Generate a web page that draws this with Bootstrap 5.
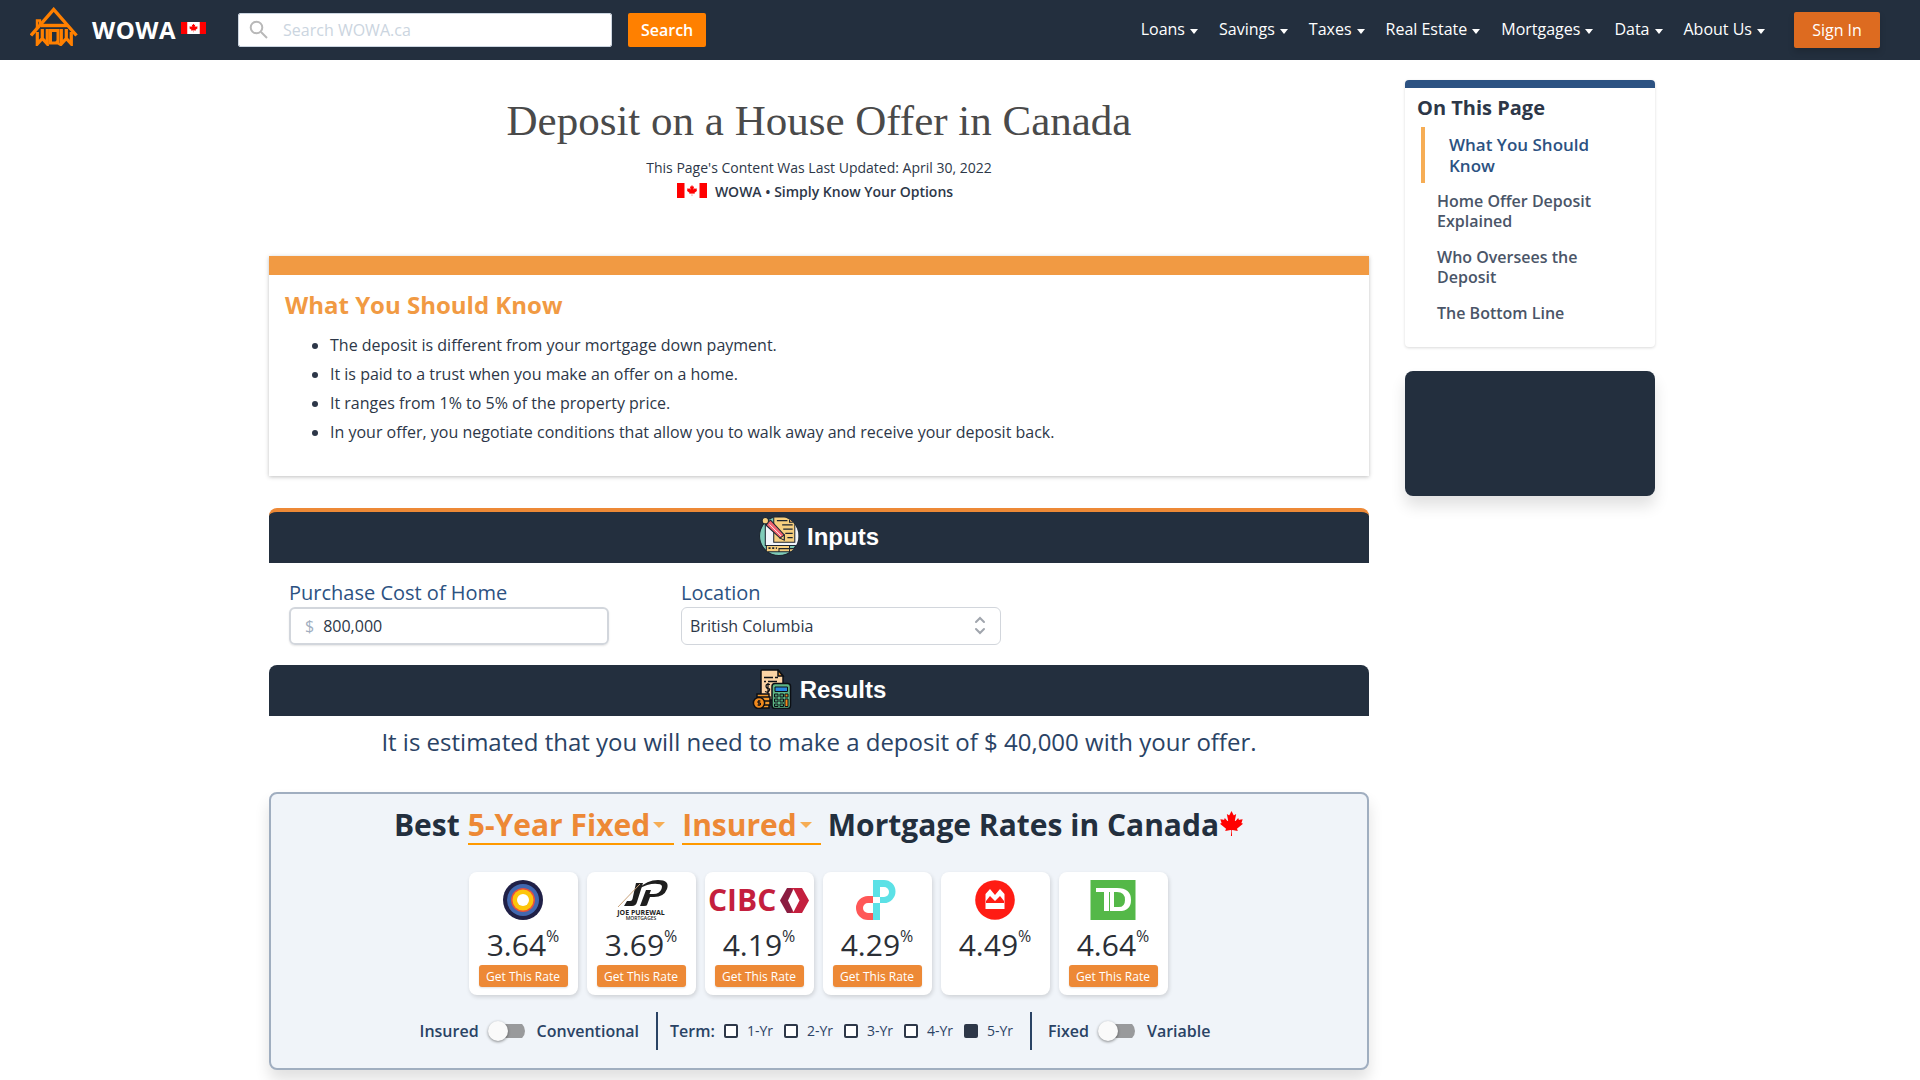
<!DOCTYPE html>
<html lang="en">
<head>
<meta charset="utf-8">
<meta name="viewport" content="width=device-width, initial-scale=1">
<title>Deposit on a House Offer in Canada | WOWA.ca</title>
<link href="https://cdn.jsdelivr.net/npm/bootstrap@5.3.0/dist/css/bootstrap.min.css" rel="stylesheet">
<style>
  :root { --navy: #232f3e; --ink: #2d3748; --blue: #2c5282; --orange: #ed8936; --deep: #2a4365; }
  body { font-family: "Open Sans", sans-serif; color: var(--ink); line-height: 24px; }
  a { text-decoration: none; }
  .topbar { background: var(--navy); height: 60px; padding: 0 40px 0 30px; }
  .brand-name { font-size: 24px; font-weight: 700; color: #fff; margin-left: 14px; line-height: 36px; letter-spacing: 0.5px; }
  .brand-flag { margin: 0 32px 4px 5px; }
  .search-field { position: relative; width: 374px; }
  .search-field svg { position: absolute; left: 11px; top: 7px; }
  .search-field input { height: 34px; border: 1px solid #cbd5e0; border-radius: 2px; padding: 0 12px 0 44px; font-size: 16px; }
  .search-field input::placeholder { color: #cbd5e0; }
  .search-btn { height: 34px; width: 78px; margin-left: 16px; background: #ff8000; color: #fff; font-weight: 600; border-radius: 2px; padding: 0; }
  .main-nav { gap: 21px; padding-bottom: 2px; }
  .main-nav a { color: #fff; font-size: 16px; display: flex; align-items: center; }
  .main-nav a::after { content: ""; border: 4px solid transparent; border-top: 5px solid #fff; border-bottom: 0; margin: 4px 0 0 5px; }
  .sign-in { width: 86px; height: 36px; margin-left: 29px; background: #dd6b20; color: #fff; border-radius: 2px; padding: 0; box-shadow: 0 4px 6px rgba(0,0,0,.15); }

  .page-wrap { gap: 36px; }
  .content-col { flex: 0 1 1100px; min-width: 0; }
  .side-col { flex: 0 0 250px; padding-top: 20px; }
  .page-title { font-family: "Liberation Serif", serif; font-size: 43px; line-height: 52px; font-weight: 400; color: #4a4a4a; margin: 35px 0 9px; }
  .meta-line { font-size: 14px; line-height: 24px; }
  .know-card { margin-top: 52px; border-top: 19px solid #f19a43; padding: 14px 16px 29px; box-shadow: 0 1px 4px rgba(0,0,0,.25); }
  .know-card h2 { color: #f19a43; font-size: 24px; line-height: 32px; font-weight: 700; margin: 0 0 10px; }
  .know-card ul { padding-left: 45px; margin: 0; }
  .know-card li { line-height: 29px; }

  .section-bar { background: var(--navy); color: #fff; border-radius: 8px 8px 0 0; height: 51px; font-family: "Liberation Sans", sans-serif; font-size: 24px; font-weight: 700; gap: 8px; margin: 0; }
  .inputs-bar { border-top: 4px solid var(--orange); height: 55px; margin-top: 32px; }
  .field-row { gap: 72px; padding: 16px 20px 20px; }
  .field { flex: 0 1 320px; }
  .field label { font-size: 20px; line-height: 28px; color: var(--blue); display: block; }
  .money { height: 38px; border: 2px solid #d2d6dc; border-radius: 6px; box-shadow: 0 1px 2px rgba(0,0,0,.1); padding-left: 14px; gap: 9px; color: #a0aec0; }
  .money input, .place select { color: var(--ink); font-size: 16px; }
  .money input { border: 0; outline: 0; padding: 0; min-width: 0; flex: 1; }
  .place { position: relative; }
  .place select { height: 38px; border: 1px solid #d2d6dc; border-radius: 6px; background-image: none; padding: 0 36px 0 8px; }
  .place svg { position: absolute; right: 15px; top: 9px; pointer-events: none; }
  .estimate { font-size: 24px; line-height: 36px; color: var(--deep); margin: 8px 0 32px; }

  .rates { border: 2px solid #a0aec0; border-radius: 8px; background: #f0f4f9; box-shadow: 0 10px 15px rgba(0,0,0,.12); padding: 9px 0 18px; margin-bottom: 10px; }
  .rates h2 { color: var(--navy); font-size: 30px; line-height: 44px; font-weight: 700; margin: 0; }
  .pick { border: 0; border-bottom: 2px solid #ff9900; background: none; color: var(--orange); font-weight: 700; font-size: 30px; line-height: 36px; padding: 0 9px 0 0; margin: 4px 0 0 8px; display: flex; align-items: center; }
  .pick:last-of-type { margin-right: 7px; }
  .pick::after { content: ""; border: 6px solid transparent; border-top: 6px solid #f6ad55; border-bottom: 0; margin-left: 3px; }
  .rate-list { gap: 9px; margin-top: 25px; padding-right: 2px; }
  .rate-card { width: 109px; height: 123px; background: #fff; border-radius: 8px; box-shadow: 1px 2px 4px rgba(0,0,0,.14); padding-top: 8px; }
  .rate-num { font-size: 30px; line-height: 42px; height: 45px; padding-top: 4px; color: #2b2f36; display: flex; }
  .rate-num span { font-size: 16px; line-height: 24px; }
  .rate-btn { width: 89px; height: 22px; background: var(--orange); color: #fff; font-size: 12px; border-radius: 3px; padding: 0; line-height: 22px; box-shadow: 0 1px 2px rgba(0,0,0,.12); }
  .filters { margin-top: 17px; padding-right: 8px; height: 38px; color: var(--deep); font-weight: 600; font-size: 16px; }
  .switch { appearance: none; width: 37px; height: 20px; margin: 0 12px 0 9px; display: flex; align-items: center; background: linear-gradient(#999a9c, #999a9c) right center / 30px 14px no-repeat; border-radius: 0 10px 10px 0; }
  .switch::before { content: ""; width: 20px; height: 20px; border-radius: 50%; background: #fafafa; box-shadow: 0 1px 3px rgba(0,0,0,.45); }
  .rule { width: 2px; height: 38px; background: var(--deep); margin: 0 12px 0 17px; }
  .term-title { margin-right: 9px; }
  .term { width: 60px; font-size: 14px; font-weight: 400; gap: 9px; }
  .term-last { width: auto; }
  .term input { appearance: none; width: 14px; height: 14px; border: 2px solid var(--ink); border-radius: 2px; background: #fff; margin: 0; }
  .term input:checked { background: var(--ink); }

  .toc { border-top: 8px solid var(--blue); border-radius: 4px; box-shadow: 0 1px 3px rgba(0,0,0,.15); padding: 5px 12px 16px; }
  .toc h2 { font-size: 20px; line-height: 30px; font-weight: 700; margin: 0 0 4px; }
  .toc a { display: block; margin-left: 4px; padding: 8px 24px 8px 16px; line-height: 20px; font-weight: 600; color: #4a5568; }
  .toc a.current { border-left: 4px solid #f6ad55; padding: 7px 24px; font-size: 17px; line-height: 21px; color: var(--blue); }
  .promo { height: 125px; margin-top: 24px; background: var(--navy); border-radius: 8px; box-shadow: 0 10px 15px rgba(0,0,0,.12); }
</style>
<script src="https://cdn.jsdelivr.net/npm/bootstrap@5.3.0/dist/js/bootstrap.bundle.min.js"></script>
</head>
<body>
<svg width="0" height="0" class="position-absolute" aria-hidden="true">
  <symbol id="leaf" viewBox="-2015 -2000 4030 4030"><path fill="#f00" d="m-90 2030 45-863a95 95 0 0 0-111-98l-859 151 116-320a65 65 0 0 0-20-73l-941-762 212-99a65 65 0 0 0 34-79l-186-572 542 115a65 65 0 0 0 73-38l105-247 423 454a65 65 0 0 0 111-57l-204-1052 327 189a65 65 0 0 0 91-27l332-652 332 652a65 65 0 0 0 91 27l327-189-204 1052a65 65 0 0 0 111 57l423-454 105 247a65 65 0 0 0 73 38l542-115-186 572a65 65 0 0 0 34 79l212 99-941 762a65 65 0 0 0-20 73l116 320-859-151a95 95 0 0 0-111 98l45 863z"/></symbol>
  <symbol id="flag" viewBox="0 0 32 16"><path fill="#fff" d="M0 0h32v16H0z"/><path fill="#f00" d="M0 0h8v16H0zM24 0h8v16h-8z"/><use href="#leaf" x="10" y="2" width="12" height="12"/></symbol>
</svg>

<header class="topbar d-flex align-items-center">
  <a href="#" class="d-flex align-items-center" aria-label="WOWA home">
    <svg class="mb-2" width="48" height="39" viewBox="0 0 48 39" fill="none" stroke="#ff8000">
      <path stroke-width="3.400" d="M1 28.500 23.700 2.500 46.500 28.500"/>
      <path stroke-width="3.400" d="M11 18.500h26"/>
      <path stroke-width="2.400" d="M10 17v-3.500H7V22"/>
      <path stroke-width="3.200" d="M7.300 25v12l5-5.500 5 5.500V22M12.300 22v10M31.300 22v15l5-5.500 5 5.500V25M36.300 22v10"/>
      <path stroke-width="3" d="M20.500 23.500h7.500v12.500h-7.500z"/>
      <path stroke-width="2" d="M26 34l4 4"/>
    </svg>
    <span class="brand-name">WOWA</span>
    <svg class="brand-flag" width="25" height="12" viewBox="0 0 32 16" preserveAspectRatio="none"><use href="#flag" width="32" height="16"/></svg>
  </a>
  <form class="d-flex" role="search">
    <div class="search-field">
      <input type="search" class="form-control" placeholder="Search WOWA.ca" aria-label="Search WOWA.ca">
      <svg width="20" height="20" fill="none" stroke="#b8b8b8" stroke-width="2"><circle cx="7.500" cy="7.500" r="5.800"/><path d="m12 12 6 6"/></svg>
    </div>
    <button type="button" class="btn search-btn">Search</button>
  </form>
  <nav class="main-nav d-flex ms-auto" aria-label="Main">
    <a href="#">Loans</a><a href="#">Savings</a><a href="#">Taxes</a><a href="#">Real Estate</a><a href="#">Mortgages</a><a href="#">Data</a><a href="#">About Us</a>
  </nav>
  <button type="button" class="btn sign-in">Sign In</button>
</header>

<div class="page-wrap d-flex justify-content-center align-items-start ps-1">
  <main class="content-col">
    <div class="text-center">
      <h1 class="page-title">Deposit on a House Offer in Canada</h1>
      <div class="meta-line">This Page's Content Was Last Updated: April 30, 2022</div>
      <div class="meta-line fw-semibold d-flex align-items-center justify-content-center pe-2">
        <svg class="me-2 mb-1" width="30" height="15" viewBox="0 0 32 16"><use href="#flag" width="32" height="16"/></svg>WOWA • Simply Know Your Options
      </div>
    </div>

    <section class="know-card">
      <h2>What You Should Know</h2>
      <ul>
        <li>The deposit is different from your mortgage down payment.</li>
        <li>It is paid to a trust when you make an offer on a home.</li>
        <li>It ranges from 1% to 5% of the property price.</li>
        <li>In your offer, you negotiate conditions that allow you to walk away and receive your deposit back.</li>
      </ul>
    </section>

    <h2 class="section-bar inputs-bar d-flex align-items-center justify-content-center">
      <svg class="mb-1" width="40" height="40" viewBox="0 0 38 38" stroke="#1d2530" stroke-width="1">
        <defs><clipPath id="disc"><circle cx="19" cy="19" r="18.500"/></clipPath></defs>
        <circle cx="19" cy="19" r="18.500" fill="#7fcbb8"/>
        <g clip-path="url(#disc)">
          <path fill="#f2f5fa" d="M6 8h32v20H6z"/>
          <path fill="#f7cf7f" d="M14 1h17v3l3 1v20H14z"/>
          <path fill="#e8a95c" d="m29 1 5 5h-5z"/>
          <path fill="#f7cf7f" d="M7 28h22v6H7zM19 31h17v3H19z"/>
          <path stroke-width="1.500" stroke-dasharray="2 1.500" d="M9 30.500h8"/>
          <path stroke-width="1.200" d="M17 4.500h10M22 8.500h10M23 12.500h9M25 16.500h7M27 20.500h5"/>
        </g>
        <path fill="#f0626e" d="m8 6 3-2 13 14v4l-4-1L7 9z"/>
        <path stroke="#fff" stroke-width=".8" d="m10 8 11 11"/>
        <path fill="#f7cf7f" d="m20 21 4 2v-5z"/>
        <circle cx="6" cy="4.500" r="3" fill="#f7cf7f"/>
      </svg>
      Inputs
    </h2>
    <div class="field-row d-flex">
      <div class="field">
        <label for="cost">Purchase Cost of Home</label>
        <div class="money d-flex align-items-center"><span>$</span><input id="cost" type="text" value="800,000"></div>
      </div>
      <div class="field">
        <label for="loc">Location</label>
        <div class="place">
          <select id="loc" class="form-select"><option>British Columbia</option><option>Ontario</option></select>
          <svg width="12" height="20" fill="none" stroke="#a0a5ad" stroke-width="2" stroke-linecap="round"><path d="m2 6 4-4 4 4M2 13l4 4 4-4"/></svg>
        </div>
      </div>
    </div>

    <h2 class="section-bar d-flex align-items-center justify-content-center">
      <svg class="mb-1" width="40" height="40" viewBox="0 0 40 40" stroke="#0c0f14" stroke-width="1.500">
        <path fill="#fbd3a4" d="M9 2q0-1 1-1h16l5 6v24H9z"/>
        <path fill="#e8963a" d="m26 1 5 6h-5z"/>
        <path d="M12 8.500h9m2 0h3M12 12.500h2m2 0h9" fill="none"/>
        <path d="M18 15.500q-4-1-4 1.500t2.500 2.500-.5 4l-3-1M16 14v11" fill="none" stroke-width="1.200"/>
        <path fill="#f39a2e" d="M5 25h12v3H5zM6 28h12v4H6zM7 32h11v4H7zM8 36h9v3H8z"/>
        <circle cx="7" cy="34" r="5.600" fill="#f28a1c"/>
        <path d="M8.500 32H6v2h2.500v2H5.500M7 31v6" fill="none" stroke-width="1"/>
        <rect x="20" y="14.500" width="18.500" height="25" rx="3" fill="#5cb585"/>
        <path fill="#2788e0" stroke-width="1" d="M23 18h12.500v4.500H23z"/>
        <path fill="#4a9d72" stroke-width="1" d="M22.500 25h3.500v3h-3.500zM28 25h3.500v3H28zM22.500 30h3.500v3h-3.500zM28 30h3.500v3H28zM22.500 35h3.500v2.500h-3.500zM28 35h3.500v2.500H28z"/>
        <path fill="#f28a1c" stroke-width="1" d="M33 25h3v3h-3zM33 30h3v7.500h-3z"/>
      </svg>
      Results
    </h2>
    <p class="estimate text-center">It is estimated that you will need to make a deposit of $ 40,000 with your offer.</p>

    <section class="rates">
      <h2 class="d-flex justify-content-center align-items-start">
        <span>Best</span>
        <button type="button" class="pick">5-Year Fixed</button>
        <button type="button" class="pick">Insured</button>
        <span>Mortgage Rates in Canada</span>
        <svg class="mt-2" width="25" height="25"><use href="#leaf"/></svg>
      </h2>

      <div class="rate-list d-flex justify-content-center">
        <div class="rate-card d-flex flex-column align-items-center">
          <svg width="100" height="40"><circle cx="50" cy="20" r="20" fill="#202047"/><circle cx="50" cy="20" r="16" fill="#4268b0"/><circle cx="50" cy="20" r="12" fill="#e8503e"/><circle cx="50" cy="20" r="10.500" fill="#fdc50b"/><circle cx="50" cy="20" r="6" fill="#fff"/></svg>
          <div class="rate-num">3.64<span>%</span></div>
          <button type="button" class="btn rate-btn">Get This Rate</button>
        </div>
        <div class="rate-card d-flex flex-column align-items-center">
          <svg width="100" height="40" fill="#1e1e1e">
            <path d="M45 3h7l-6 19q-1 4-5 4h-8l3-5h3q2 0 2.500-2z"/>
            <path fill-rule="evenodd" d="M47 9Q56 0 67 0q12 0 9 9-3 8-13 8h-4l-3 8q0 1-3 1h-4l6-16h5l-1.500 4h4q6 0 8-5 2-5-4-5-8-1-19.500 5z"/>
            <path d="M27 27 49 4" stroke="#c9a27a"/>
            <text x="50" y="35" font-size="7" font-weight="700" text-anchor="middle">JOE PUREWAL</text>
            <text x="50" y="40" font-size="5" font-weight="600" text-anchor="middle">MORTGAGES</text>
          </svg>
          <div class="rate-num">3.69<span>%</span></div>
          <button type="button" class="btn rate-btn">Get This Rate</button>
        </div>
        <div class="rate-card d-flex flex-column align-items-center">
          <svg width="100" height="40"><text x="-1" y="31" font-size="30" font-weight="700" fill="#c41f3e">CIBC</text><path fill="#8b1d41" d="M78 8h10v25H78l-7-12.500z"/><path fill="#c41f3e" d="M82 8h11l7 12.500L93 33H82l7-12.500z"/><path fill="#fff" d="m84.500 9 6 11.500-6 11.500-5.500-11.500z"/></svg>
          <div class="rate-num">4.19<span>%</span></div>
          <button type="button" class="btn rate-btn">Get This Rate</button>
        </div>
        <div class="rate-card d-flex flex-column align-items-center">
          <svg width="100" height="40"><path fill="#5ce1e6" d="M46 0h11a11.500 11.500 0 0 1 0 23h-4v17h-7z"/><path fill="#fff" d="M53 7h4a5 5 0 0 1 0 10h-4z"/><path fill="#ff5757" d="M46 16h-5a12 12 0 0 0 0 24h5v-7h-5a5 5 0 0 1 0-10h5z"/><path fill="#fff" d="M46 17h7v6h-7z"/></svg>
          <div class="rate-num">4.29<span>%</span></div>
          <button type="button" class="btn rate-btn">Get This Rate</button>
        </div>
        <div class="rate-card d-flex flex-column align-items-center">
          <svg width="100" height="40"><circle cx="50" cy="20" r="19.800" fill="#ff1c14"/><path fill="#fff" d="M40.500 29V14l4.500-5 5 6 5-6 4.500 5v15z"/><path fill="#ff1c14" d="M41 23v-2l4-5 5 5 5-5 4 5v2z"/></svg>
          <div class="rate-num">4.49<span>%</span></div>
        </div>
        <div class="rate-card d-flex flex-column align-items-center">
          <svg width="100" height="40"><path fill="#54b848" d="M27.500 0h45v40h-45z"/><path fill="#fff" d="M33 8h21q14 0 14 12T54 31H41V12h-8z"/><path fill="#54b848" d="M51 12h3q8 0 8 8t-8 7h-3z"/><path d="M46.500 12v19" stroke="#54b848"/></svg>
          <div class="rate-num">4.64<span>%</span></div>
          <button type="button" class="btn rate-btn">Get This Rate</button>
        </div>
      </div>

      <div class="filters d-flex align-items-center justify-content-center">
        <label for="ins">Insured</label><input id="ins" type="checkbox" class="switch" aria-label="Conventional"><span>Conventional</span>
        <div class="rule"></div>
        <span class="term-title">Term:</span>
        <label class="term d-flex align-items-center"><input type="checkbox">1-Yr</label>
        <label class="term d-flex align-items-center"><input type="checkbox">2-Yr</label>
        <label class="term d-flex align-items-center"><input type="checkbox">3-Yr</label>
        <label class="term d-flex align-items-center"><input type="checkbox">4-Yr</label>
        <label class="term term-last d-flex align-items-center"><input type="checkbox" checked>5-Yr</label>
        <div class="rule me-3"></div>
        <label for="fix">Fixed</label><input id="fix" type="checkbox" class="switch" aria-label="Variable"><span>Variable</span>
      </div>
    </section>
  </main>

  <aside class="side-col">
    <nav class="toc" aria-label="On this page">
      <h2>On This Page</h2>
      <a href="#" class="current">What You Should Know</a>
      <a href="#">Home Offer Deposit Explained</a>
      <a href="#">Who Oversees the Deposit</a>
      <a href="#">The Bottom Line</a>
    </nav>
    <div class="promo"></div>
  </aside>
</div>
</body>
</html>
